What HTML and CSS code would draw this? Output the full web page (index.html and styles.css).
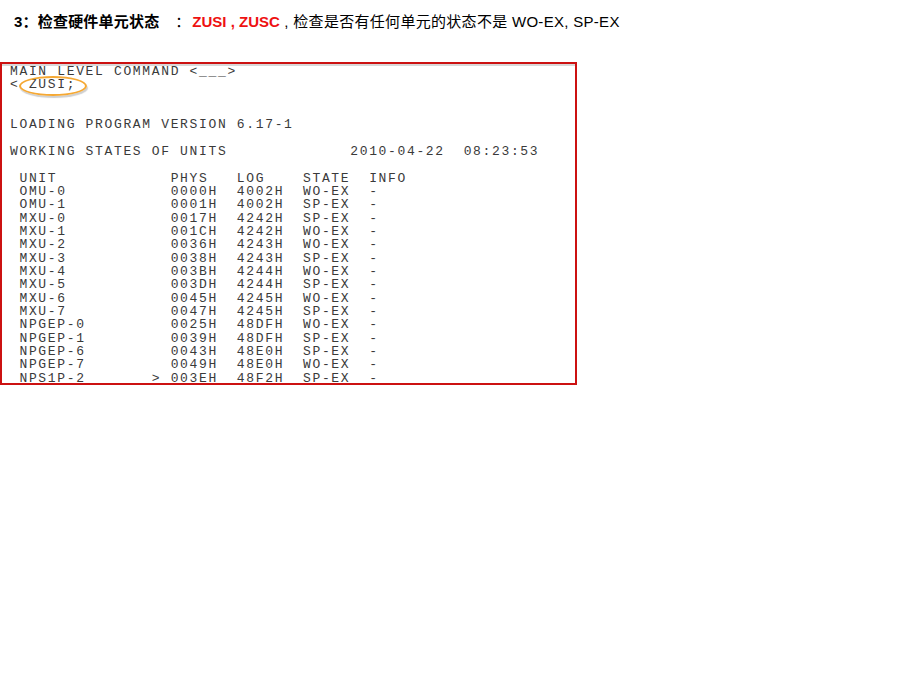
FILE: index.html
```html
<!DOCTYPE html>
<html>
  <head>
    <link rel="stylesheet" href="styles.css">
  </head>
  <body>
    <div class="title"><span class="step">3：检查硬件单元状态</span><span class="colon">：</span><span class="cmd">ZUSI , ZUSC</span><span class="desc"> , 检查是否有任何单元的状态不是 WO-EX, SP-EX</span></div>

    <div class="shot">
      <span class="ring"></span>
<pre class="screen">MAIN LEVEL COMMAND &lt;___&gt;
&lt; ZUSI;


LOADING PROGRAM VERSION 6.17-1

WORKING STATES OF UNITS             2010-04-22  08:23:53

 UNIT            PHYS   LOG    STATE  INFO
 OMU-0           0000H  4002H  WO-EX  -
 OMU-1           0001H  4002H  SP-EX  -
 MXU-0           0017H  4242H  SP-EX  -
 MXU-1           001CH  4242H  WO-EX  -
 MXU-2           0036H  4243H  WO-EX  -
 MXU-3           0038H  4243H  SP-EX  -
 MXU-4           003BH  4244H  WO-EX  -
 MXU-5           003DH  4244H  SP-EX  -
 MXU-6           0045H  4245H  WO-EX  -
 MXU-7           0047H  4245H  SP-EX  -
 NPGEP-0         0025H  48DFH  WO-EX  -
 NPGEP-1         0039H  48DFH  SP-EX  -
 NPGEP-6         0043H  48E0H  SP-EX  -
 NPGEP-7         0049H  48E0H  WO-EX  -
 NPS1P-2       &gt; 003EH  48F2H  SP-EX  -</pre>
    </div>
  </body>
</html>
```

FILE: styles.css
```css
body{
  margin: 0;
  background-color: white;
  font-family: "Liberation Sans", "Noto Sans CJK SC", sans-serif;
}
.title{
  padding: 13px 0 0 14px;
  height: 20px;
  font-size: 15px;
  line-height: 18px;
  color: black;
  white-space: pre;
}
.step{
  font-weight: bold;
  letter-spacing: 0.2px;
}
.colon{
  margin-left: 16px;
  margin-right: 2px;
}
.cmd{
  color: #ee1111;
  font-weight: bold;
}
.desc{
  letter-spacing: 0.3px;
}
.shot{
  position: relative;
  margin-top: 29px;
  width: 573px;
  height: 319px;
  border: 2px solid #cc1111;
  box-shadow: inset 0 2px 0 #d8d8d8;
}
.screen{
  margin: 0;
  padding: 1px 0 0 8px;
  font-family: "Liberation Mono", monospace;
  font-size: 13px;
  letter-spacing: 1.65px;
  line-height: 13.33px;
  color: #3a3a3a;
}
.ring{
  position: absolute;
  left: 17px;
  top: 12px;
  width: 64px;
  height: 16px;
  border: 2px solid #f5a833;
  border-radius: 50%;
  box-shadow: 1px 2px 1px #cfcfcf;
}
```
